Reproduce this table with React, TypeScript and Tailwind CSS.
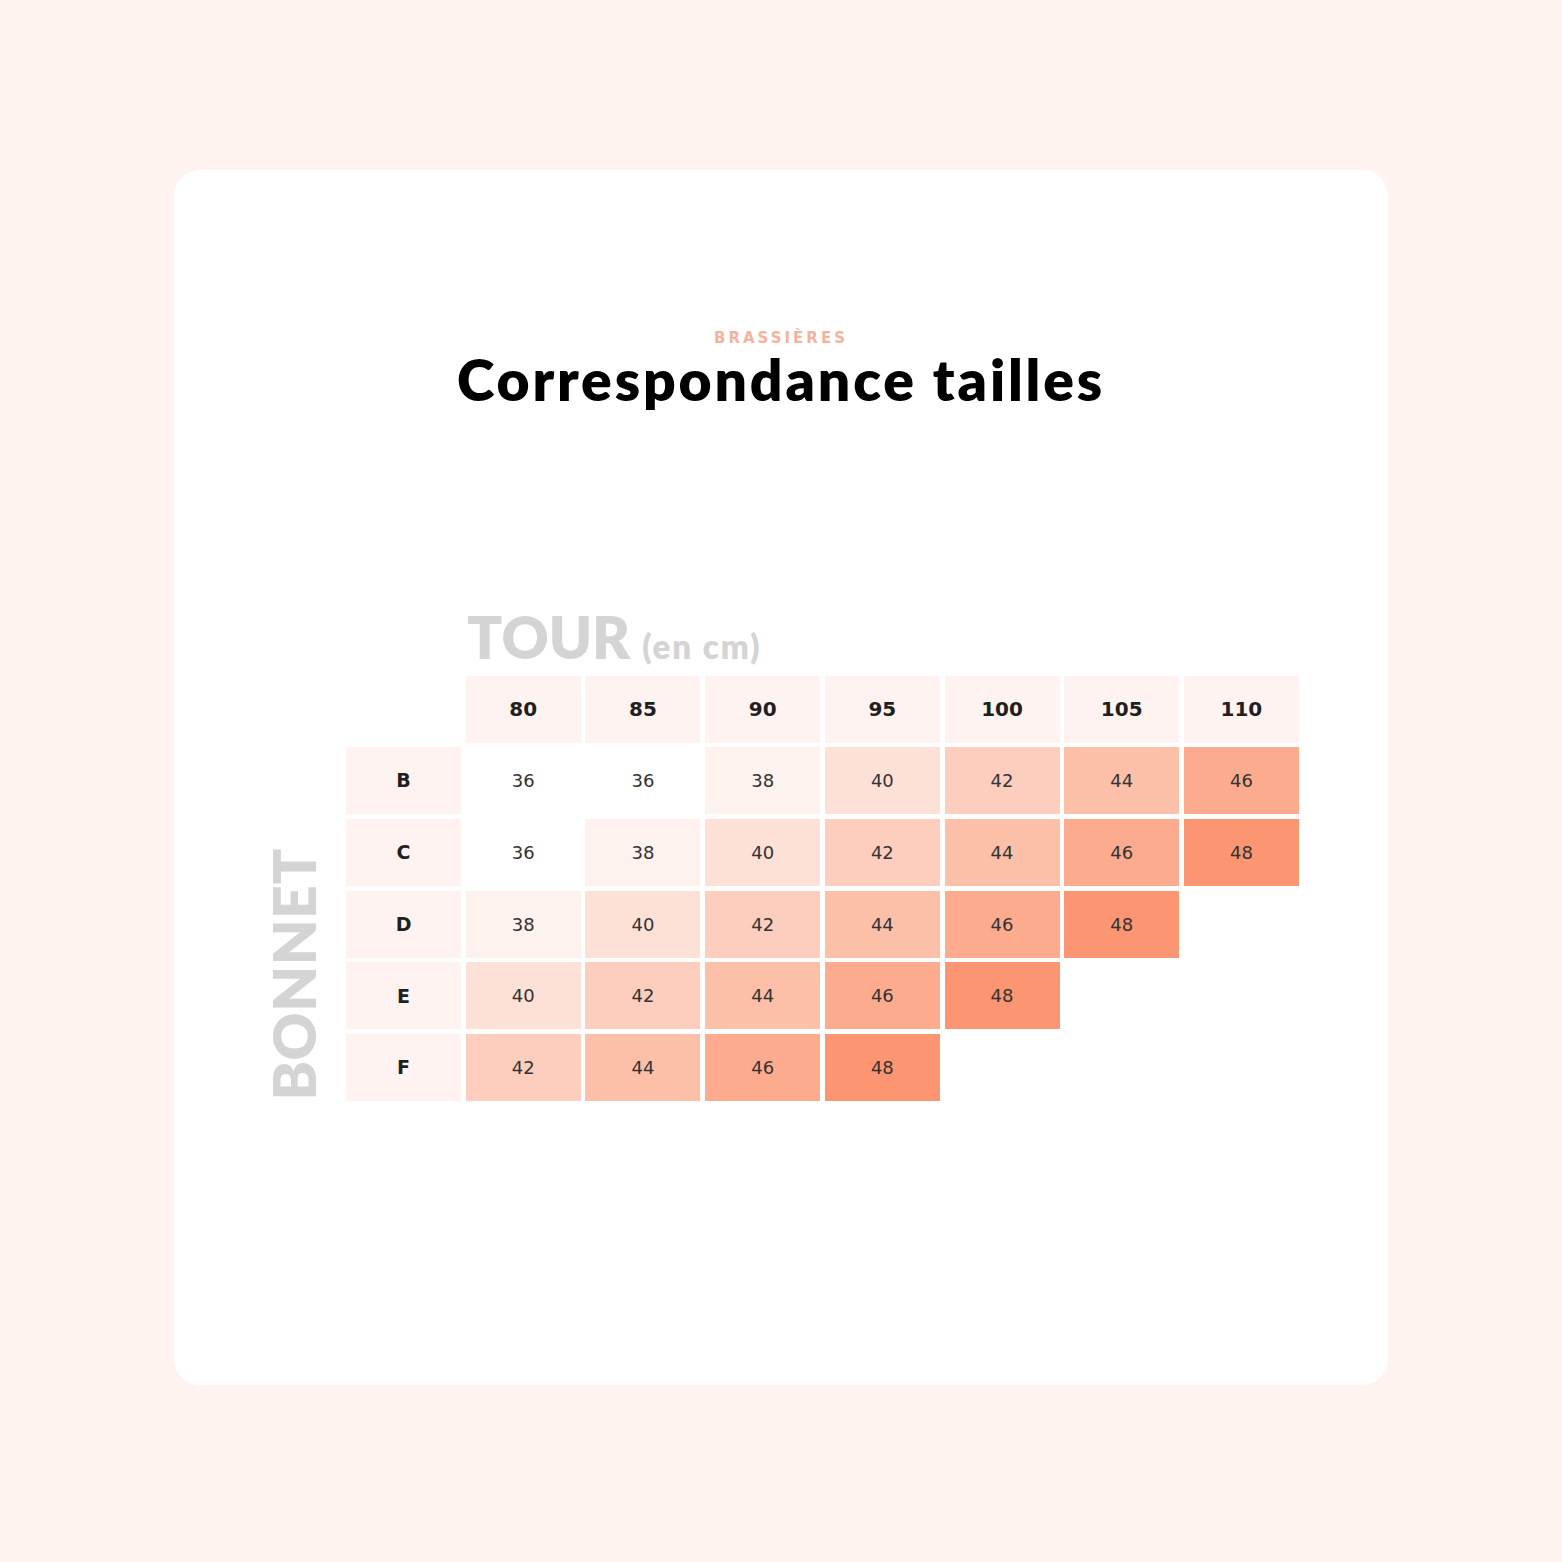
const COLS = ['80', '85', '90', '95', '100', '105', '110']

const ROWS: { cup: string; values: (number | null)[] }[] = [
  { cup: 'B', values: [36, 36, 38, 40, 42, 44, 46] },
  { cup: 'C', values: [36, 38, 40, 42, 44, 46, 48] },
  { cup: 'D', values: [38, 40, 42, 44, 46, 48, null] },
  { cup: 'E', values: [40, 42, 44, 46, 48, null, null] },
  { cup: 'F', values: [42, 44, 46, 48, null, null, null] },
]

const SHADES: Record<number, string> = {
  36: 'bg-white',
  38: 'bg-[#fef2ee]',
  40: 'bg-[#fde0d6]',
  42: 'bg-[#fdcebd]',
  44: 'bg-[#fcbfa8]',
  46: 'bg-[#fcab8f]',
  48: 'bg-[#fc9572]',
}

const gotham = "font-['Lato','Inter',sans-serif]"
const dejavu = "font-['DejaVu_Sans','Liberation_Sans',sans-serif]"

export default function App() {
  return (
    <div className="min-h-[1562px] w-full bg-[#fef3ef] pt-[170px]">
      <div className="mx-auto flex h-[1215px] w-[1214px] flex-col items-center rounded-[26px] bg-white pt-[157px]">
        <p className={`${dejavu} text-[15px] font-bold tracking-[0.2em] text-[#f4b39c]`}>
          BRASSIÈRES
        </p>
        <h1 className={`${gotham} mt-[-3px] text-[57px] leading-[64px] font-extrabold tracking-[0.05em] text-black`}>
          Correspondance tailles
        </h1>

        <div className="mt-[198px] flex items-end gap-[29px] pl-[8px]">
          <div
            className={`${gotham} mb-[0px] text-[59px] leading-[46px] font-extrabold tracking-[0.01em] text-[#d4d4d4] [writing-mode:vertical-rl] rotate-180`}
          >
            BONNET
          </div>

          <div className="flex flex-col">
            <div className={`${gotham} ml-[121px] flex items-baseline gap-[12px] text-[#d4d4d4] font-extrabold`}>
              <span className="text-[58px] leading-[56px]">TOUR</span>
              <span className="text-[33px] leading-[40px] tracking-[0.06em]">(en cm)</span>
            </div>

            <div className="mt-[10px] grid grid-cols-[repeat(8,115px)] auto-rows-[67px] gap-[4.7px]">
              <div />
              {COLS.map((c) => (
                <div
                  key={c}
                  className={`${dejavu} flex items-center justify-center bg-[#fef3f0] text-[20px] font-bold text-[#1f1f1f]`}
                >
                  {c}
                </div>
              ))}

              {ROWS.map((row) => (
                <div key={row.cup} className="contents">
                  <div
                    className={`${dejavu} flex items-center justify-center bg-[#fef3f0] text-[19px] font-bold text-[#1f1f1f]`}
                  >
                    {row.cup}
                  </div>
                  {row.values.map((v, i) =>
                    v === null ? (
                      <div key={i} />
                    ) : (
                      <div
                        key={i}
                        className={`${dejavu} ${SHADES[v]} flex items-center justify-center text-[18px] text-[#333333]`}
                      >
                        {v}
                      </div>
                    ),
                  )}
                </div>
              ))}
            </div>
          </div>
        </div>
      </div>
    </div>
  )
}
